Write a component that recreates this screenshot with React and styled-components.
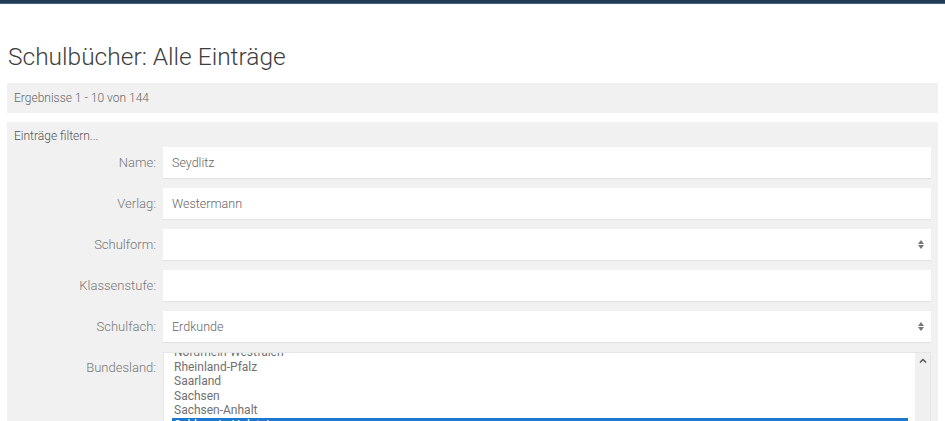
import React from "react";
import styled, { createGlobalStyle } from "styled-components";

const Global = createGlobalStyle`
  html, body { margin: 0; padding: 0; background: #fff; }
  body { font-family: Roboto, "Noto Sans", sans-serif; color: #555; }
  * { box-sizing: border-box; }
`;

const TopBar = styled.div`
  height: 4px;
  background: #213b57;
  border-bottom: 1px solid #4b6580;
`;

const Page = styled.main`
  padding: 0 7px;
`;

const Title = styled.h1`
  margin: 37px 0 0 1px;
  font-size: 24.5px;
  line-height: 32px;
  font-weight: 300;
  color: #3e3e3e;
  height: 42px;
`;

const ResultBar = styled.div`
  height: 30px;
  background: #f1f1f1;
  display: flex;
  align-items: center;
  padding: 0 7px;
  font-size: 12px;
  font-weight: 300;
  color: #666;
`;

const Panel = styled.section`
  margin-top: 9px;
  background: #f1f1f1;
  padding: 5px 7px 20px 7px;
`;

const PanelHeader = styled.div`
  font-size: 12px;
  line-height: 18px;
  font-weight: 300;
  color: #555;
  margin-bottom: 2px;
`;

const Form = styled.div`
  display: grid;
  grid-template-columns: 142px 1fr;
  column-gap: 7px;
  row-gap: 10px;
`;

const Label = styled.label`
  text-align: right;
  font-size: 13px;
  font-weight: 300;
  color: #777;
  line-height: 31px;
`;

const Field = styled.div`
  height: 31px;
  background: #fff;
  box-shadow: 0 1px 1px rgba(0, 0, 0, 0.06);
  display: flex;
  align-items: center;
  justify-content: space-between;
  padding: 0 7px 0 9px;
  font-size: 12.5px;
  font-weight: 300;
  color: #666;
`;

const Arrows = styled.span`
  display: flex;
  flex-direction: column;
  align-items: center;
  gap: 1px;
  svg { display: block; }
`;

const ListBox = styled.div`
  height: 80px;
  background: #fff;
  border: 1px solid #e6e6e6;
  display: flex;
  overflow: hidden;
`;

const ListViewport = styled.div`
  flex: 1;
  overflow: hidden;
  padding-left: 8px;
`;

const Options = styled.ul`
  list-style: none;
  margin: -8px 7px 0 0;
  padding: 0;
`;

const Option = styled.li`
  font-size: 12px;
  line-height: 14.5px;
  padding: 0 2px;
  color: ${(p) => (p.$selected ? "#fff" : "#707070")};
  background: ${(p) => (p.$selected ? "#1e78d0" : "transparent")};
  font-weight: 400;
`;

const Scrollbar = styled.div`
  width: 15px;
  background: #f0f0f0;
  display: flex;
  flex-direction: column;
  justify-content: space-between;
  align-items: center;
  padding: 5px 0 0;
`;

const Thumb = styled.div`
  width: 9px;
  height: 8px;
  background: #cdcdcd;
  margin-bottom: -3px;
`;

const SelectArrows = () => (
  <Arrows>
    <svg width="6" height="4" viewBox="0 0 6 4"><path d="M0 4 L3 0 L6 4 Z" fill="#777" /></svg>
    <svg width="6" height="4" viewBox="0 0 6 4"><path d="M0 0 L3 4 L6 0 Z" fill="#777" /></svg>
  </Arrows>
);

const laender = [
  "Nordrhein-Westfalen",
  "Rheinland-Pfalz",
  "Saarland",
  "Sachsen",
  "Sachsen-Anhalt",
  "Schleswig-Holstein",
  "Thüringen",
];

export default function App() {
  return (
    <>
      <Global />
      <TopBar />
      <Page>
        <Title>Schulbücher: Alle Einträge</Title>
        <ResultBar>Ergebnisse 1 - 10 von 144</ResultBar>
        <Panel>
          <PanelHeader>Einträge filtern...</PanelHeader>
          <Form>
            <Label>Name:</Label>
            <Field>Seydlitz</Field>
            <Label>Verlag:</Label>
            <Field>Westermann</Field>
            <Label>Schulform:</Label>
            <Field><span /><SelectArrows /></Field>
            <Label>Klassenstufe:</Label>
            <Field />
            <Label>Schulfach:</Label>
            <Field>Erdkunde<SelectArrows /></Field>
            <Label>Bundesland:</Label>
            <ListBox>
              <ListViewport>
                <Options>
                  {laender.map((l) => (
                    <Option key={l} $selected={l === "Schleswig-Holstein"}>{l}</Option>
                  ))}
                </Options>
              </ListViewport>
              <Scrollbar>
                <svg width="8" height="5" viewBox="0 0 8 5"><path d="M1 4.5 L4 1.5 L7 4.5" fill="none" stroke="#555" strokeWidth="1.5" /></svg>
                <Thumb />
              </Scrollbar>
            </ListBox>
          </Form>
        </Panel>
      </Page>
    </>
  );
}
